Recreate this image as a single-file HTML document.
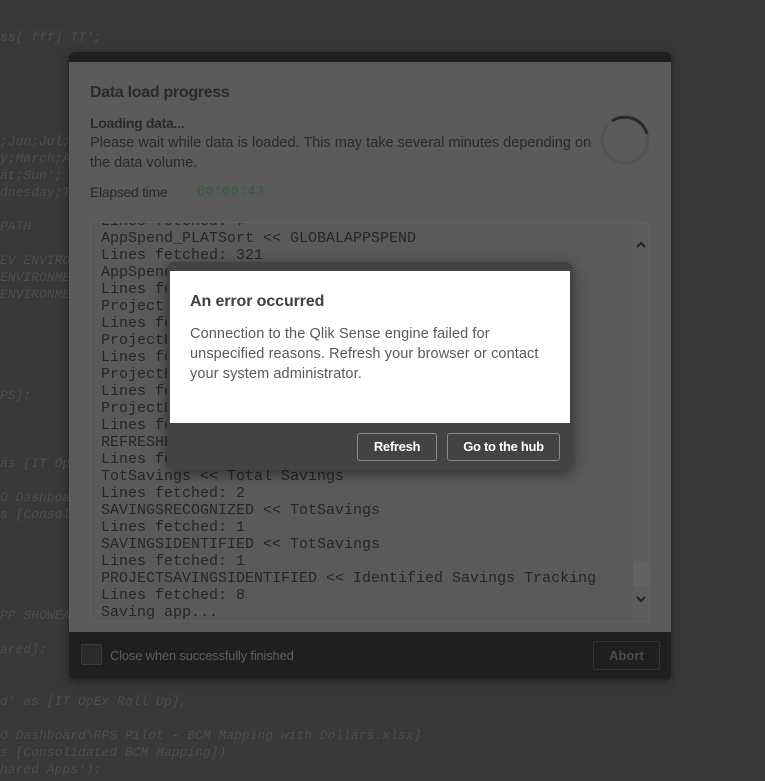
<!DOCTYPE html>
<html><head><style>
*{margin:0;padding:0;box-sizing:border-box}
body{width:765px;height:781px;overflow:hidden;background:#383838;position:relative;font-family:"Liberation Sans",sans-serif}
.bg{position:absolute;left:0;font-family:"Liberation Mono",monospace;font-size:13px;color:#4e4e4e;white-space:pre;font-style:italic}
.dlg{position:absolute;left:69px;top:52px;width:602px;height:627px;background:#1f1f1f;border-radius:6px;box-shadow:0 2px 8px rgba(0,0,0,.5)}
.body{position:absolute;left:0;top:10px;width:602px;height:570px;background:#5b5b5b}
.t{position:absolute;color:#2a2a2a;letter-spacing:-0.3px;white-space:nowrap}
.log{position:absolute;left:21px;top:160px;width:560px;height:400px;background:#5a5a5a;border:1px solid #616161;overflow:hidden}
.log pre{position:absolute;left:10px;top:-10px;font-family:"Liberation Mono",monospace;font-size:15px;line-height:17px;color:#262626}
.sb{position:absolute;right:0;top:0;width:16px;height:100%;background:#5d5d5d}
.err{position:absolute;left:167px;top:262px;width:406px;height:208px;background:#434343;border-radius:8px;box-shadow:0 4px 14px rgba(0,0,0,.45)}
.white{position:absolute;left:3px;top:9px;width:400px;height:152px;background:#fff}
.btn{position:absolute;top:171px;height:28px;border:1px solid #8a8a8a;border-radius:3px;color:#fff;font-weight:bold;font-size:13px;text-align:center;line-height:26px;letter-spacing:-0.3px}
</style></head><body>
<div class="bg" style="top:30px">ss[.fff] TT';</div>
<div class="bg" style="top:134px">;Jun;Jul;</div>
<div class="bg" style="top:151px">y;March;A</div>
<div class="bg" style="top:168px">at;Sun';</div>
<div class="bg" style="top:185px">dnesday;T</div>
<div class="bg" style="top:219px">PATH</div>
<div class="bg" style="top:253px">EV ENVIRO</div>
<div class="bg" style="top:270px">ENVIRONME</div>
<div class="bg" style="top:287px">ENVIRONME</div>
<div class="bg" style="top:388px">PS]:</div>
<div class="bg" style="top:456px">as [IT Op</div>
<div class="bg" style="top:490px">O Dashboa</div>
<div class="bg" style="top:507px">s [Consol</div>
<div class="bg" style="top:608px">PP SHOWEA</div>
<div class="bg" style="top:642px">ared]:</div>
<div class="bg" style="top:694px">d' as [IT OpEx Roll Up],</div>
<div class="bg" style="top:728px">O Dashboard\RPS Pilot - BCM Mapping with Dollars.xlsx]</div>
<div class="bg" style="top:745px">s [Consolidated BCM Mapping])</div>
<div class="bg" style="top:762px">hared Apps');</div>

<div class="dlg">
 <div class="body">
  <div class="t" style="left:21px;top:22px;font-size:16px;font-weight:bold">Data load progress</div>
  <div class="t" style="left:21px;top:53px;font-size:14px;font-weight:bold">Loading data...</div>
  <div class="t" style="left:21px;top:71px;font-size:14.5px;line-height:20px;letter-spacing:0px">Please wait while data is loaded. This may take several minutes depending on<br>the data volume.</div>
  <div class="t" style="left:21px;top:122px;font-size:14px">Elapsed time</div>
  <div class="t" style="left:128px;top:122px;font-size:14px;font-family:'Liberation Mono',monospace;color:#2c6238;letter-spacing:0">00:00:43</div>
  <svg style="position:absolute;left:530px;top:52px" width="52" height="52"><circle cx="26" cy="26" r="23" fill="none" stroke="#545454" stroke-width="3"/><path d="M13 7 A23 23 0 0 1 48 20" fill="none" stroke="#2a2a2a" stroke-width="3"/></svg>
  <div class="log"><pre>Lines fetched: 7
AppSpend_PLATSort &lt;&lt; GLOBALAPPSPEND
Lines fetched: 321
AppSpend
Lines fetched
Project
Lines fetched
ProjectH
Lines fetched
ProjectH
Lines fetched
ProjectH
Lines fetched
REFRESHE
Lines fetched
TotSavings &lt;&lt; Total Savings
Lines fetched: 2
SAVINGSRECOGNIZED &lt;&lt; TotSavings
Lines fetched: 1
SAVINGSIDENTIFIED &lt;&lt; TotSavings
Lines fetched: 1
PROJECTSAVINGSIDENTIFIED &lt;&lt; Identified Savings Tracking
Lines fetched: 8
Saving app...</pre>
   <div class="sb"><div style="position:absolute;left:0;top:340px;width:16px;height:24px;background:#626262"></div>
   <svg style="position:absolute;left:3px;top:18px" width="10" height="8"><path d="M1 6 L5 2 L9 6" fill="none" stroke="#222" stroke-width="2"/></svg>
   <svg style="position:absolute;left:3px;top:372px" width="10" height="8"><path d="M1 2 L5 6 L9 2" fill="none" stroke="#222" stroke-width="2"/></svg></div>
  </div>
 </div>
 <div style="position:absolute;left:12px;top:592px;width:21px;height:21px;border:1px solid #3a3a3a;background:#2a2a2a;border-radius:2px"></div>
 <div style="position:absolute;left:41px;top:596px;font-size:13px;color:#5e5e5e;letter-spacing:-0.2px">Close when successfully finished</div>
 <div style="position:absolute;left:524px;top:589px;width:67px;height:29px;border:1px solid #333;border-radius:2px;color:#4a4a4a;font-weight:bold;font-size:13px;text-align:center;line-height:27px">Abort</div>
</div>

<div class="err">
 <div class="white">
  <div style="position:absolute;left:20px;top:22px;font-size:16px;font-weight:bold;color:#404040;letter-spacing:-0.1px">An error occurred</div>
  <div style="position:absolute;left:20px;top:53px;white-space:nowrap;font-size:14.5px;line-height:20px;color:#595959;letter-spacing:0.1px">Connection to the Qlik Sense engine failed for<br>unspecified reasons. Refresh your browser or contact<br>your system administrator.</div>
 </div>
 <div class="btn" style="left:190px;width:80px">Refresh</div>
 <div class="btn" style="left:280px;width:113px">Go to the hub</div>
</div>
</body></html>
